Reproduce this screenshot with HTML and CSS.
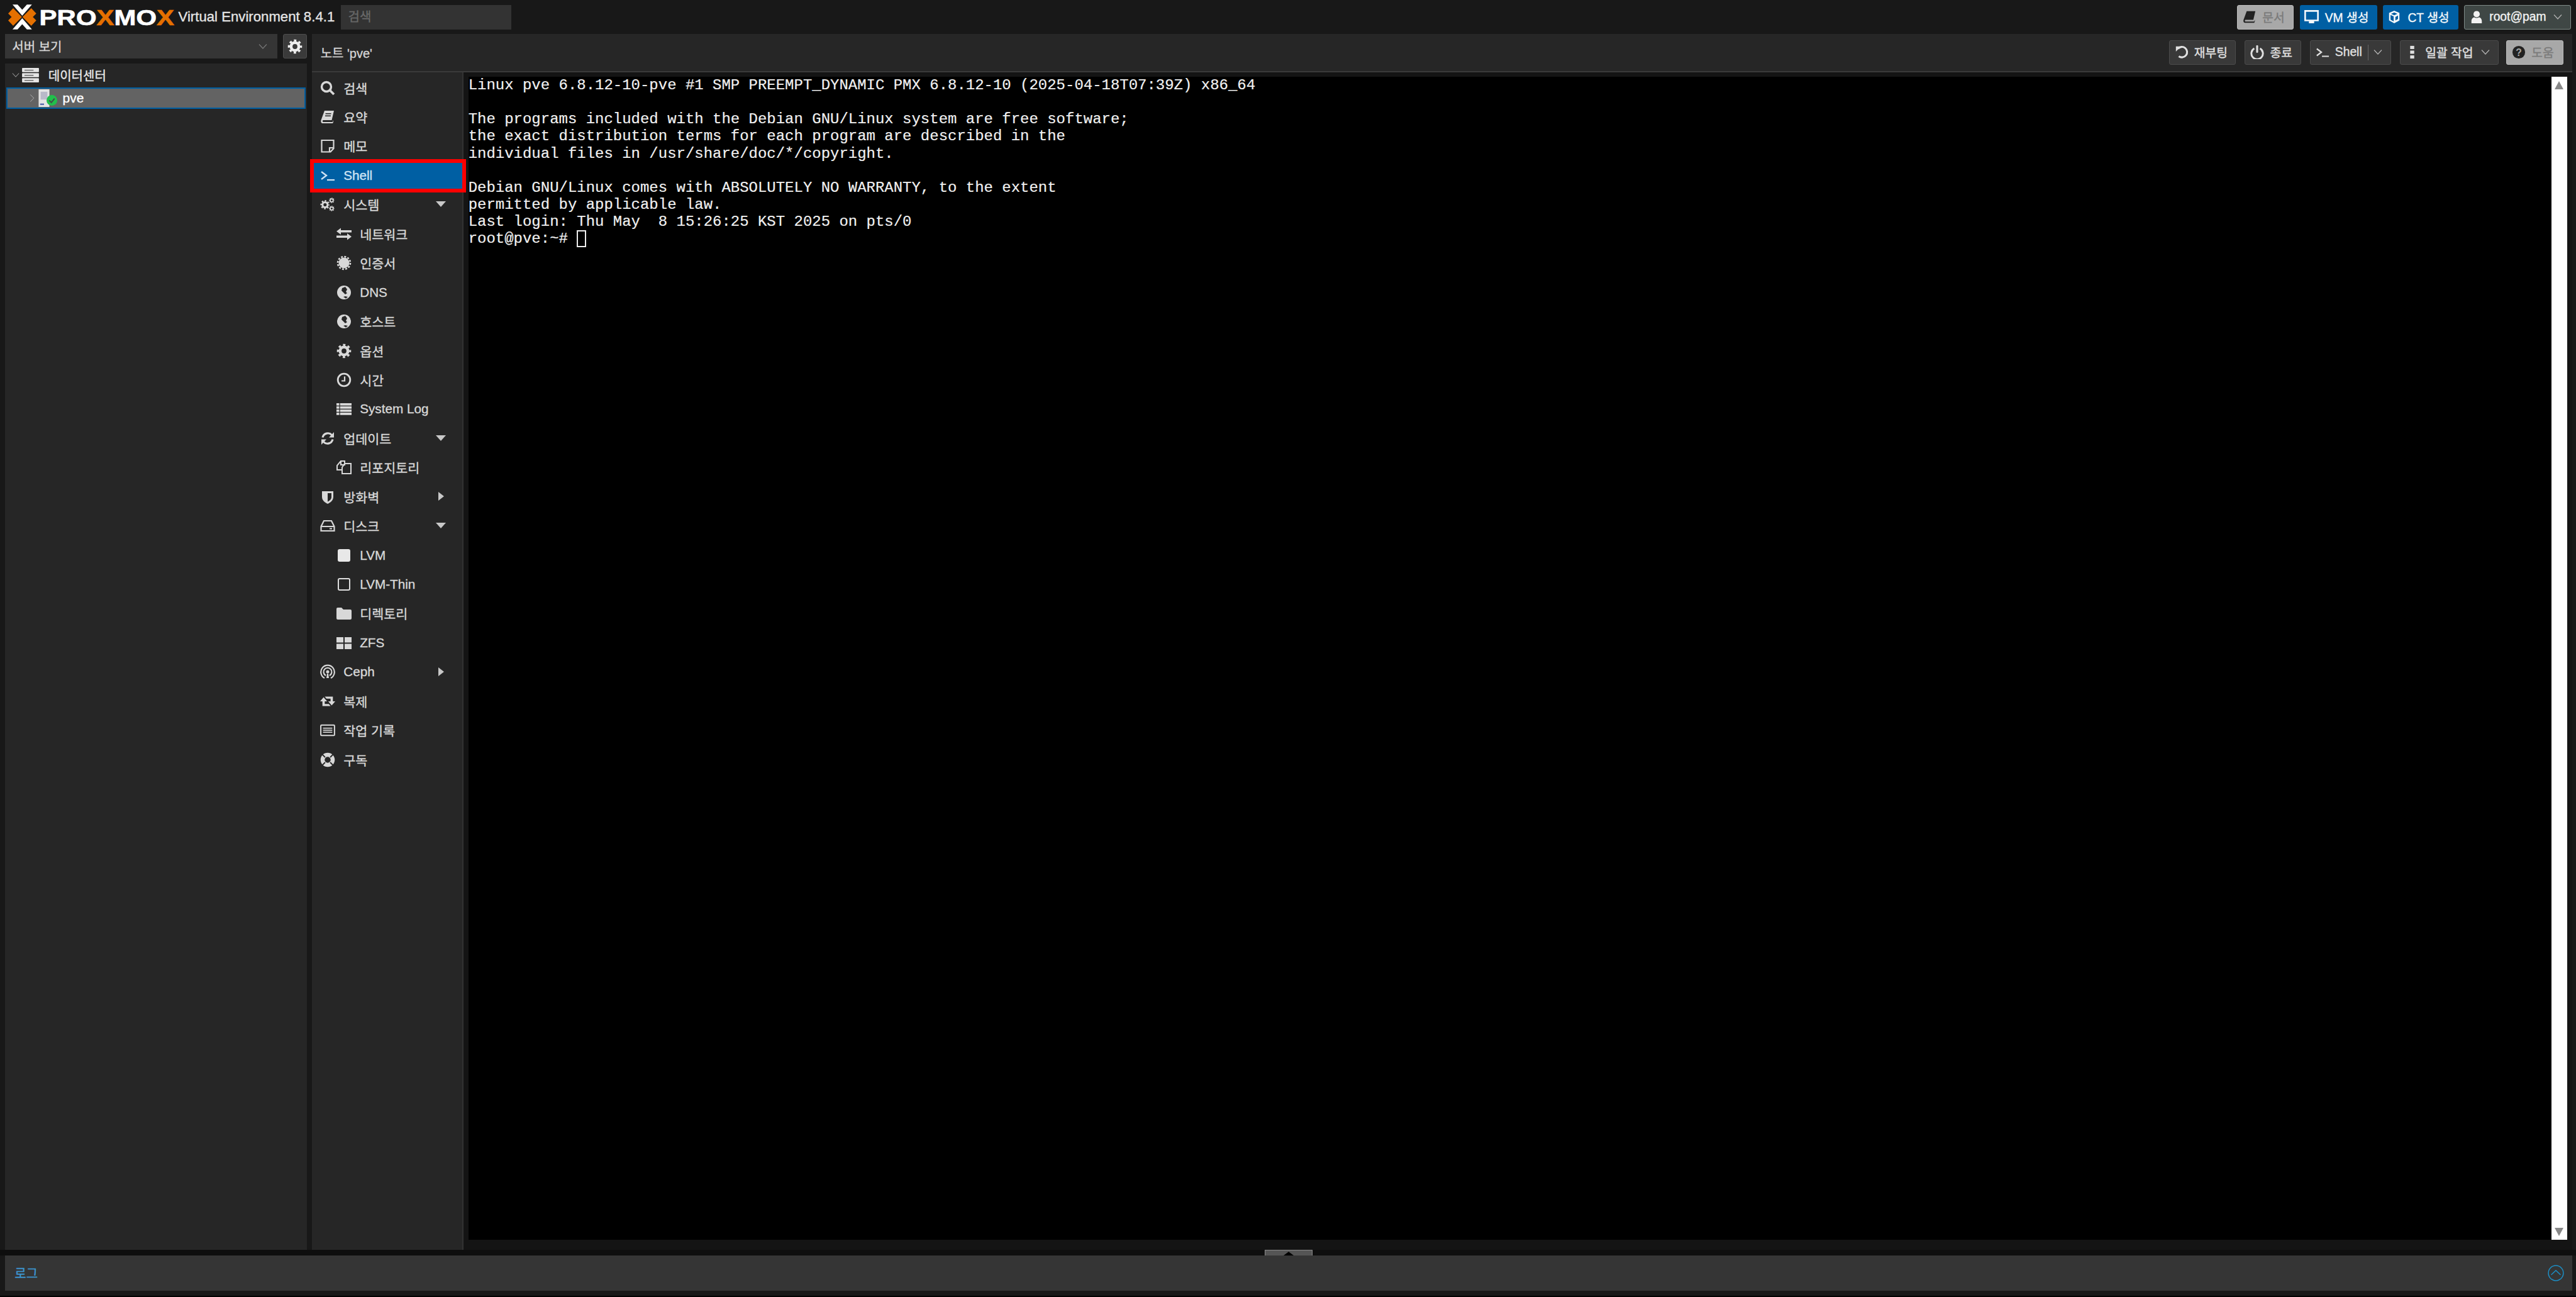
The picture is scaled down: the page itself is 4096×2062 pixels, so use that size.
FILE: index.html
```html
<!DOCTYPE html>
<html lang="ko">
<head>
<meta charset="utf-8">
<title>pve - Proxmox Virtual Environment</title>
<link rel="stylesheet" href="styles.css">
</head>
<body>
<svg class="defs" width="0" height="0" aria-hidden="true">
  <defs>
    <symbol id="i-gear" viewBox="0 0 24 24"><circle cx="12" cy="12" r="6.2" fill="none" stroke="currentColor" stroke-width="4.6"/><circle cx="12" cy="12" r="9.6" fill="none" stroke="currentColor" stroke-width="3.4" stroke-dasharray="3.8 3.74" stroke-dashoffset="1.9"/></symbol>
    <symbol id="i-globe" viewBox="0 0 24 24"><circle cx="12" cy="12" r="11" fill="currentColor"/><path d="M9 5l5-2 3 4-2 4 2 2-3 2-3-3-3-3zM11 19l3-1 4 1-3 2.5z" fill="#262626"/></symbol>
    <symbol id="i-down" viewBox="0 0 14 10"><polyline points="1,1.5 7,8 13,1.5" fill="none" stroke="currentColor" stroke-width="1.2"/></symbol>
    <symbol id="i-term" viewBox="0 0 24 24"><polyline points="2,6 10,12 2,18" fill="none" stroke="currentColor" stroke-width="2.4"/><rect x="11" y="18" width="12" height="2.2" fill="currentColor"/></symbol>
    <symbol id="i-book" viewBox="0 0 24 24"><path d="M7 2h15l-3.500 15H5c-1.500 0-1.500 3 0 3h15l1-3.500V20l-1 2H4c-2.500 0-3-2.500-2.500-5z" fill="currentColor"/><rect x="8.500" y="6" width="9" height="1.500" fill="#262626"/><rect x="8" y="9.500" width="9" height="1.500" fill="#262626"/></symbol>
  </defs>
</svg>
<div class="app">
  <header class="topbar">
    <svg class="logo" viewBox="0 0 270 40" role="img" aria-label="Proxmox">
      <polygon fill="#e57000" points="8,6 22,20 8,34 0,25.500 5.500,20 0,14.500"/>
      <polygon fill="#e57000" points="37,6 23,20 37,34 45,25.500 39.500,20 45,14.500"/>
      <polygon fill="#fff" points="7,0 15,0 22.500,8.500 30,0 38,0 22.500,18"/>
      <polygon fill="#fff" points="7,40 15,40 22.500,31.500 30,40 38,40 22.500,22"/>
      <text class="logo-text" x="50" y="33.500" textLength="216" lengthAdjust="spacingAndGlyphs">PRO<tspan class="logo-x">X</tspan>MO<tspan class="logo-x">X</tspan></text>
    </svg>
    <span class="version">Virtual Environment 8.4.1</span>
    <div class="search">검색</div>
    <div class="top-actions">
      <div class="btn btn-gray w-doc"><svg class="ico dark"><use href="#i-book"/></svg><span>문서</span></div>
      <div class="btn btn-blue w-vm"><svg class="ico" viewBox="0 0 24 24"><path d="M1 1h22v17h-7v3h-8v-3H1zM3.500 3.500v12h17v-12z" fill="currentColor" fill-rule="evenodd"/></svg><span>VM 생성</span></div>
      <div class="btn btn-blue w-ct"><svg class="ico" viewBox="0 0 24 24"><path d="M12 1l9 4v13l-9 5-9-5V5zM12 4L6.500 6.500 12 9l5.500-2.500zM5.500 8.500v8l5.500 3v-8.500zM14 12v6l4.500-2.500v-6z" fill="currentColor" fill-rule="evenodd"/></svg><span>CT 생성</span></div>
      <div class="btn btn-user w-user"><svg class="ico" viewBox="0 0 24 24"><circle cx="12" cy="7" r="5.500" fill="currentColor"/><path d="M3 23v-4c0-4 3-6.500 5-6.500 2 1.500 6 1.500 8 0 2 0 5 2.500 5 6.500v4z" fill="currentColor"/></svg><span>root@pam</span><svg class="chev"><use href="#i-down"/></svg></div>
    </div>
  </header>

  <main class="main">
    <aside class="side">
      <div class="side-head">
        <div class="select"><span>서버 보기</span><svg class="chev dim"><use href="#i-down"/></svg></div>
        <div class="gear-btn"><svg class="ico"><use href="#i-gear"/></svg></div>
      </div>
      <div class="tree">
        <div class="tree-row root">
          <svg class="chev tree-arrow"><use href="#i-down"/></svg>
          <svg class="server" viewBox="0 0 28 24"><rect y="0" width="28" height="7" rx="1" fill="#e6e6e6"/><rect y="8.500" width="28" height="7" rx="1" fill="#e6e6e6"/><rect y="17" width="28" height="7" rx="1" fill="#e6e6e6"/><rect x="4" y="3" width="15" height="1.500" fill="#666"/><rect x="4" y="11.500" width="15" height="1.500" fill="#666"/><rect x="4" y="20" width="15" height="1.500" fill="#666"/></svg>
          <span>데이터센터</span>
        </div>
        <div class="tree-row node">
          <svg class="tree-arrow right" viewBox="0 0 10 16"><polyline points="1.500,1 8.500,8 1.500,15" fill="none" stroke="currentColor" stroke-width="1.200"/></svg>
          <span class="node-ico">
            <svg viewBox="0 0 30 36" class="node-svg"><rect x="4" y="0" width="22" height="36" fill="#e4e4e4"/><rect x="8" y="5" width="14" height="16" fill="#b9b9c9"/><rect x="7" y="29" width="8" height="3" fill="#5566aa"/></svg>
            <svg viewBox="0 0 20 20" class="status"><circle cx="10" cy="10" r="10" fill="#21bf4b"/><polyline points="5,10 9,14 15,6.500" fill="none" stroke="#40504a" stroke-width="2.400"/></svg>
          </span>
          <span class="node-name">pve</span>
        </div>
      </div>
    </aside>

    <section class="content">
      <div class="content-head">
        <span class="title">노트 'pve'</span>
        <div class="head-actions">
          <div class="btn btn-dark w-reboot"><svg class="ico" viewBox="0 0 24 24"><path d="M5.500 6A9 9 0 1 1 7 19" fill="none" stroke="currentColor" stroke-width="3.400"/><polygon points="2,2 11,2 2,11" fill="currentColor"/></svg><span>재부팅</span></div>
          <div class="btn btn-dark w-stop"><svg class="ico" viewBox="0 0 24 24"><path d="M7 5.500a10 10 0 1 0 10 0" fill="none" stroke="currentColor" stroke-width="3.200"/><rect x="10.300" y="0" width="3.400" height="13" rx="1.200" fill="currentColor"/></svg><span>종료</span></div>
          <div class="btn btn-dark w-shell"><svg class="ico"><use href="#i-term"/></svg><span>Shell</span><i class="sep"></i><svg class="chev"><use href="#i-down"/></svg></div>
          <div class="btn btn-dark w-bulk"><svg class="ico" viewBox="0 0 8 24"><rect y="1" width="7" height="5.500" fill="currentColor"/><rect y="9.200" width="7" height="5.500" fill="currentColor"/><rect y="17.500" width="7" height="5.500" fill="currentColor"/></svg><span>일괄 작업</span><svg class="chev"><use href="#i-down"/></svg></div>
          <div class="btn btn-gray w-help"><svg class="ico dark" viewBox="0 0 24 24"><circle cx="12" cy="12" r="11" fill="currentColor"/><text x="12" y="18" class="help-q">?</text></svg><span>도움</span></div>
        </div>
      </div>

      <div class="content-body">
        <nav class="nav">
          <div class="nav-item"><svg class="ico"  viewBox="0 0 24 24"><circle cx="10" cy="10" r="7.500" fill="none" stroke="currentColor" stroke-width="3.400"/><line x1="15" y1="15" x2="22" y2="22" stroke="currentColor" stroke-width="3.800"/></svg><span>검색</span></div>
          <div class="nav-item"><svg class="ico"><use href="#i-book"/></svg><span>요약</span></div>
          <div class="nav-item"><svg class="ico" viewBox="0 0 24 24"><path d="M2.500 3h19v13l-5 5.500h-14zM21 15h-6v6" fill="none" stroke="currentColor" stroke-width="2.200"/></svg><span>메모</span></div>
          <div class="nav-item active"><svg class="ico"><use href="#i-term"/></svg><span>Shell</span></div>
          <div class="nav-item"><svg class="ico" viewBox="0 0 26 24"><use href="#i-gear" x="0" y="4" width="17" height="17"/><use href="#i-gear" x="15" y="0" width="10" height="10"/><use href="#i-gear" x="15" y="14" width="10" height="10"/></svg><span>시스템</span><i class="tri-down"></i></div>
          <div class="nav-item sub"><svg class="ico" viewBox="0 0 24 24"><path d="M7 2.500v3.500h17v3.500H7v3.500L0 7.800zM17 11v3.500H0V18h17v3.500l7-5.200z" fill="currentColor"/></svg><span>네트워크</span></div>
          <div class="nav-item sub"><svg class="ico" viewBox="0 0 24 24"><circle cx="12" cy="12" r="8.500" fill="currentColor"/><circle cx="12" cy="12" r="10" fill="none" stroke="currentColor" stroke-width="2.600" stroke-dasharray="3 2.240"/></svg><span>인증서</span></div>
          <div class="nav-item sub"><svg class="ico"><use href="#i-globe"/></svg><span>DNS</span></div>
          <div class="nav-item sub"><svg class="ico"><use href="#i-globe"/></svg><span>호스트</span></div>
          <div class="nav-item sub"><svg class="ico"><use href="#i-gear"/></svg><span>옵션</span></div>
          <div class="nav-item sub"><svg class="ico" viewBox="0 0 24 24"><circle cx="12" cy="12" r="9.800" fill="none" stroke="currentColor" stroke-width="2.800"/><path d="M13 6.500v7H8" fill="none" stroke="currentColor" stroke-width="2.200"/></svg><span>시간</span></div>
          <div class="nav-item sub"><svg class="ico" viewBox="0 0 24 24"><g fill="currentColor"><rect y="3" width="24" height="3.800"/><rect y="8" width="24" height="3.800"/><rect y="13" width="24" height="3.800"/><rect y="18" width="24" height="3.800"/></g><rect x="4.500" y="3" width="1.200" height="19" fill="#262626"/></svg><span>System Log</span></div>
          <div class="nav-item"><svg class="ico" viewBox="0 0 24 24"><path d="M4 10.500A8.500 8.500 0 0 1 18.500 6.500M20 13.500A8.500 8.500 0 0 1 5.500 17.500" fill="none" stroke="currentColor" stroke-width="3.200"/><polygon points="22,2 22,10.500 14,10.500" fill="currentColor"/><polygon points="2,22 2,13.500 10,13.500" fill="currentColor"/></svg><span>업데이트</span><i class="tri-down"></i></div>
          <div class="nav-item sub"><svg class="ico" viewBox="0 0 24 24"><path d="M7 2h6v6H7zM7 2L1 9v7h8M13 6h5l5 0v16H9V12l4-6z" fill="none" stroke="currentColor" stroke-width="2"/></svg><span>리포지토리</span></div>
          <div class="nav-item"><svg class="ico" viewBox="0 0 24 24"><path d="M3 3h18v9c0 6-5 9-9 11-4-2-9-5-9-11z" fill="currentColor"/><path d="M12 6h6v6c0 4-3 6-6 7.500z" fill="#262626"/></svg><span>방화벽</span><i class="tri-right"></i></div>
          <div class="nav-item"><svg class="ico" viewBox="0 0 24 24"><path d="M6 4h12l4.500 9v7h-21v-7zM2 13h20" fill="none" stroke="currentColor" stroke-width="2.200"/><rect x="15" y="15.500" width="4" height="2" fill="currentColor"/></svg><span>디스크</span><i class="tri-down"></i></div>
          <div class="nav-item sub"><i class="sq solid"></i><span>LVM</span></div>
          <div class="nav-item sub"><i class="sq outline"></i><span>LVM-Thin</span></div>
          <div class="nav-item sub"><svg class="ico" viewBox="0 0 24 24"><path d="M0 5a2 2 0 0 1 2-2h6l3 3h11a2 2 0 0 1 2 2v12a2 2 0 0 1-2 2H2a2 2 0 0 1-2-2z" fill="currentColor"/></svg><span>디렉토리</span></div>
          <div class="nav-item sub"><svg class="ico" viewBox="0 0 24 24"><g fill="currentColor"><rect y="3" width="11" height="8.500"/><rect x="13" y="3" width="11" height="8.500"/><rect y="13.500" width="11" height="8.500"/><rect x="13" y="13.500" width="11" height="8.500"/></g></svg><span>ZFS</span></div>
          <div class="nav-item"><svg class="ico" viewBox="0 0 24 24"><g fill="none" stroke="currentColor" stroke-width="2.200"><path d="M7 22a10.800 10.800 0 1 1 10 0"/><path d="M9 18a6.500 6.500 0 1 1 6 0"/></g><path d="M10 22l1-7h2l1 7" fill="currentColor"/><circle cx="12" cy="12" r="2.500" fill="currentColor"/></svg><span>Ceph</span><i class="tri-right"></i></div>
          <div class="nav-item"><svg class="ico" viewBox="0 0 26 24"><path d="M6 5L0 12h4v8h14l-3-3.500H8V12h4zM20 19l6-7h-4V4H8l3 3.500h7V12h-4z" fill="currentColor"/></svg><span>복제</span></div>
          <div class="nav-item"><svg class="ico" viewBox="0 0 26 24"><rect x="1.200" y="3" width="23.600" height="18" rx="1.500" fill="none" stroke="currentColor" stroke-width="2.200"/><g fill="currentColor"><rect x="5" y="7.500" width="16" height="1.800"/><rect x="5" y="11" width="16" height="1.800"/><rect x="5" y="14.500" width="16" height="1.800"/></g></svg><span>작업 기록</span></div>
          <div class="nav-item"><svg class="ico" viewBox="0 0 24 24"><circle cx="12" cy="12" r="8" fill="none" stroke="currentColor" stroke-width="6.500"/><g stroke="#262626" stroke-width="1.800"><line x1="3.500" y1="3.500" x2="8" y2="8"/><line x1="20.500" y1="3.500" x2="16" y2="8"/><line x1="3.500" y1="20.500" x2="8" y2="16"/><line x1="20.500" y1="20.500" x2="16" y2="16"/></g></svg><span>구독</span></div>
        </nav>
        <div class="term-wrap">
          <div class="term">
            <div class="term-line">Linux pve 6.8.12-10-pve #1 SMP PREEMPT_DYNAMIC PMX 6.8.12-10 (2025-04-18T07:39Z) x86_64</div>
            <div class="term-line"> </div>
            <div class="term-line">The programs included with the Debian GNU/Linux system are free software;</div>
            <div class="term-line">the exact distribution terms for each program are described in the</div>
            <div class="term-line">individual files in /usr/share/doc/*/copyright.</div>
            <div class="term-line"> </div>
            <div class="term-line">Debian GNU/Linux comes with ABSOLUTELY NO WARRANTY, to the extent</div>
            <div class="term-line">permitted by applicable law.</div>
            <div class="term-line">Last login: Thu May  8 15:26:25 KST 2025 on pts/0</div>
            <div class="term-line">root@pve:~# <i class="cursor"></i></div>
          </div>
          <div class="scrollbar"><i class="sb-up"></i><i class="sb-down"></i></div>
        </div>
      </div>
      <div class="annot"></div>
    </section>
  </main>

  <div class="splitter"><div class="handle"><i></i></div></div>
  <footer class="log">
    <span class="log-title">로그</span>
    <svg class="log-toggle" viewBox="0 0 28 28"><circle cx="14" cy="14" r="12.800" fill="none" stroke="#1c8fc6" stroke-width="1.600"/><polyline points="6,17 14,9.500 22,17" fill="none" stroke="#1c8fc6" stroke-width="1.600"/></svg>
  </footer>
  <div class="foot"></div>
</div>
</body>
</html>
```
FILE: styles.css
```css
* { box-sizing: border-box; }
html, body { margin: 0; height: 100%; overflow: hidden; background: #181818; }
body { font-family: "Liberation Sans", "Noto Sans CJK KR", sans-serif; font-size: 20.7px; color: #dcdcdc; -webkit-text-stroke: .35px currentColor; }
.defs { position: absolute; }
i { display: block; font-style: normal; }
.app { display: flex; flex-direction: column; width: 4096px; height: 2062px; }

/* top bar */
.topbar { display: flex; align-items: center; height: 54px; padding: 0 8.4px 0 12.5px; flex: none; }
.logo { width: 268px; height: 40px; flex: none; }
.logo-text { font-family: "Liberation Sans", sans-serif; font-weight: 700; font-size: 36px; fill: #fff; stroke: #fff; stroke-width: .7px; -webkit-text-stroke: 0; }
.logo-x { fill: #e57000; stroke: #e57000; }
.version { margin-left: 3px; font-size: 22.2px; color: #e4e4e4; white-space: nowrap; }
.search { margin-left: 9.3px; width: 271.8px; height: 39px; background: #333; color: #696969; padding-left: 12px; line-height: 39px; font-size: 20px; }
.top-actions { margin-left: auto; display: flex; gap: 9.3px; }

/* buttons */
.btn { display: flex; align-items: center; height: 39px; border-radius: 3px; border: 1px solid transparent; font-size: 19.3px; white-space: nowrap; gap: 9px; flex: none; padding: 0 13px 0 8px; }
.btn-gray { background: #a8a8a8; border-color: #bcbcbc; color: #7b7b7b; }
.btn-blue { background: #005fa3; color: #f4f8fb; }
.btn-user { background: #3f4745; border-color: #7e8a87; color: #f2f2f2; }
.btn-dark { background: #393939; border-color: #4b4b4b; color: #e0e0e0; }
.ico { width: 24px; height: 24px; flex: none; color: inherit; }
.btn .ico { width: 22px; height: 22px; }
.ico.dark { color: #222; }
.chev { width: 14px; height: 10px; flex: none; color: #b5b5b5; }
.chev.dim { color: #777; }
.btn .chev { margin-left: auto; }
.btn .sep + .chev { margin-left: 0; }
.w-doc { width: 90.3px; }
.w-vm { width: 122.9px; padding-left: 5px; }
.w-vm .ico { width: 25px; height: 25px; }
.w-ct { width: 120px; padding-left: 6.500px; gap: 10px; }
.w-user { width: 169.4px; }
.w-reboot { width: 106.6px; }
.w-stop { width: 89.4px; }
.w-shell { width: 129.4px; }
.w-bulk { width: 156.9px; }
.w-help { width: 90.3px; margin-left: -1.9px; }
.sep { margin-left: auto; width: 1px; height: 25px; background: #666; }
.help-q { font-family: "Liberation Sans", sans-serif; font-size: 17px; font-weight: 700; text-anchor: middle; fill: #a8a8a8; stroke: none; -webkit-text-stroke: 0; }

/* main */
.main { display: flex; flex: 1; min-height: 0; padding: 0 6.5px 0 7.8px; gap: 8.4px; }
.side { width: 480px; flex: none; display: flex; flex-direction: column; gap: 8px; }
.side-head { display: flex; height: 39px; gap: 8.4px; flex: none; }
.select { flex: 1; display: flex; align-items: center; justify-content: space-between; background: #353535; padding: 0 16px 0 11.5px; font-size: 20px; color: #d8d8d8; }
.gear-btn { width: 38px; display: flex; align-items: center; justify-content: center; background: #3a3a3a; border: 1px solid #4d4d4d; border-radius: 3px; color: #eee; }
.tree { flex: 1; background: #262626; padding-top: 2.8px; font-size: 20px; }
.tree-row { position: relative; display: flex; align-items: center; height: 34.8px; }
.tree-row.root { padding: 0 0 3px 11px; color: #e8e8e8; }
.tree-arrow { width: 12px; height: 9px; color: #999; }
.server { width: 27px; height: 23px; margin-left: 4px; flex: none; }
.root span { margin-left: 15px; }
.tree-row.node { margin: 0 1.8px; background: #636363; border: 2.5px solid #005fa3; padding-left: 35px; }
.tree-arrow.right { width: 8px; height: 14px; color: #b0b0b0; }
.node-ico { position: relative; display: block; width: 24px; height: 28px; margin-left: 3px; }
.node-svg { display: block; width: 24px; height: 28px; }
.status { position: absolute; left: 16px; top: 9px; width: 17px; height: 17px; }
.node-name { margin-left: 18px; color: #fff; font-size: 21px; }

/* content */
.content { position: relative; flex: 1; min-width: 0; display: flex; flex-direction: column; background: #141414; }
.content-head { display: flex; align-items: center; justify-content: space-between; height: 60.5px; flex: none; background: #262626; border-bottom: 2.8px solid #3a3a3a; padding: 0 14px 0 13.5px; }
.title { font-size: 20px; color: #d4d4d4; }
.head-actions { display: flex; gap: 14px; }
.content-body { flex: 1; min-height: 0; display: flex; }

/* nav */
.nav { width: 241px; flex: none; background: #262626; border-right: 2.8px solid #333; padding-top: 1.9px; }
.nav-item { position: relative; display: flex; align-items: center; height: 46.45px; padding-left: 13px; gap: 13px; color: #d8d8d8; white-space: nowrap; }
.nav-item.sub { padding-left: 39px; }
.nav-item.active { background: #005fa3; color: #cfe3f3; }
.sq { width: 20px; height: 20px; margin: 0 2px; flex: none; border-radius: 3px; }
.sq.solid { background: #e8e8e8; }
.sq.outline { border: 2.5px solid #ddd; }
.tri-down, .tri-right { position: absolute; width: 0; height: 0; top: 50%; }
.tri-down { right: 26px; margin-top: -5px; border-left: 8.500px solid transparent; border-right: 8.500px solid transparent; border-top: 9.500px solid #c8c8c8; }
.tri-right { right: 29px; margin-top: -7.500px; border-top: 7.500px solid transparent; border-bottom: 7.500px solid transparent; border-left: 9.500px solid #c8c8c8; }

/* terminal */
.term-wrap { flex: 1; min-width: 0; display: flex; padding: 7.4px 7.5px 15.8px 7.5px; }
.term { flex: 1; min-width: 0; background: #000; color: #f0f0f0; font-family: "Liberation Mono", monospace; font-size: 23.97px; line-height: 27.18px; -webkit-text-stroke: .2px currentColor; }
.term-line { white-space: pre; height: 27.18px; }
.cursor { display: inline-block; width: 14.800px; height: 27px; border: 2px solid #eee; vertical-align: top; }
.scrollbar { position: relative; width: 25px; flex: none; background: #fff; }
.sb-up, .sb-down { position: absolute; left: 5px; width: 0; height: 0; border-left: 7.500px solid transparent; border-right: 7.500px solid transparent; }
.sb-up { top: 7.500px; border-bottom: 13px solid #888; }
.sb-down { bottom: 6px; border-top: 13px solid #888; }

/* annotation */
.annot { position: absolute; left: -3.700px; top: 199.200px; width: 248.600px; height: 53px; border: 6.500px solid #f00; }

/* bottom */
.splitter { position: relative; height: 8.400px; flex: none; background: #0e0e0e; }
.handle { position: absolute; left: 2010.800px; top: 0; width: 76.300px; height: 8.400px; background: #555; border: 1px solid #8a8a8a; border-bottom: 0; }
.handle i { position: absolute; left: 50%; top: 2px; margin-left: -8px; width: 0; height: 0; border-left: 8px solid transparent; border-right: 8px solid transparent; border-bottom: 6.500px solid #000; }
.log { display: flex; align-items: center; justify-content: space-between; height: 56px; flex: none; margin: 0 6.500px 0 7.800px; padding: 0 13px 0 15.500px; background: #353535; }
.log-title { color: #3d97d3; font-size: 20px; }
.log-toggle { width: 26px; height: 26px; }
.foot { height: 10.400px; flex: none; background: #181818; border-bottom: 2px solid #000; }
```
